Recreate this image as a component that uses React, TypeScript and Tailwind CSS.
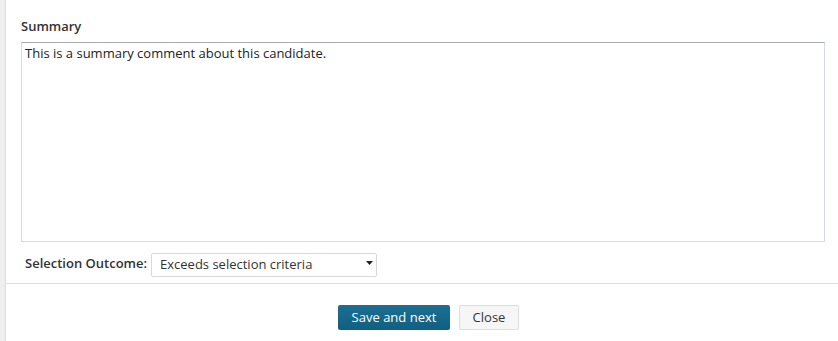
import { useState } from "react";

const outcomes = [
  "Exceeds selection criteria",
  "Meets selection criteria",
  "Does not meet selection criteria",
];

export default function App() {
  const [summary, setSummary] = useState("This is a summary comment about this candidate.");
  const [outcome, setOutcome] = useState(outcomes[0]);

  return (
    <div className="flex h-[341px] w-[838px] bg-white text-[#333] font-['Open_Sans',sans-serif]">
      <div className="w-[6px] shrink-0 border-r border-[#dcdcdc] bg-[#efefef]" />

      <div className="flex flex-1 flex-col">
        <div className="pl-[15px] pr-[13px] pt-[16px]">
          <label className="block text-[13px] font-semibold leading-[20px] text-[#333]">Summary</label>
          <textarea
            value={summary}
            onChange={(e) => setSummary(e.target.value)}
            className="mt-[6px] block h-[200px] w-full resize-none border border-[#d5dbe3] border-t-[#aaa] px-[3px] py-[1px] text-[13px] leading-[18px] text-[#222] outline-none"
          />

          <div className="mt-[9px] flex items-center pl-[4px]">
            <span className="text-[13px] font-semibold text-[#333]">Selection Outcome:</span>
            <div className="relative ml-[4px]">
              <select
                value={outcome}
                onChange={(e) => setOutcome(e.target.value)}
                className="h-[24px] w-[226px] appearance-none rounded-[2px] border border-[#d9d9d9] bg-white pl-[8px] pr-6 text-[13px] text-[#333] outline-none"
              >
                {outcomes.map((o) => (
                  <option key={o} value={o}>{o}</option>
                ))}
              </select>
              <svg className="pointer-events-none absolute right-[4px] top-[10px] h-[4px] w-[7px]" viewBox="0 0 7 4">
                <path d="M0 0h7L3.5 4z" fill="#222" />
              </svg>
            </div>
          </div>
        </div>

        <div className="mt-[6px] border-t border-[#dedede]" />

        <div className="flex justify-center gap-[9px] pl-[13px] pt-[21px]">
          <button className="h-[25px] w-[112px] rounded-[2px] bg-gradient-to-b from-[#1b6f93] to-[#125f80] text-[13px] text-white">
            Save and next
          </button>
          <button className="h-[25px] w-[60px] rounded-[2px] border border-[#dddddd] bg-[#f6f6f6] text-[13px] text-[#333]">
            Close
          </button>
        </div>
      </div>
    </div>
  );
}
